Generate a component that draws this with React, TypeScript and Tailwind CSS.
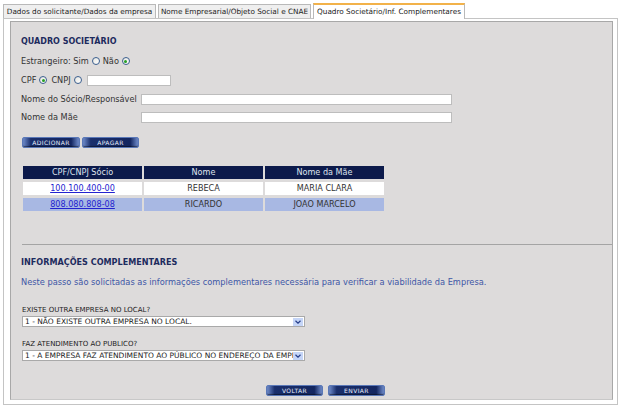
import React from 'react';

const font = { fontFamily: '"DejaVu Sans", Verdana, sans-serif' };

function Radio({ checked }: { checked?: boolean }) {
  return (
    <span className="inline-flex items-center justify-center w-[8px] h-[8px] rounded-full border border-[#3b5f8f] bg-[linear-gradient(135deg,#e6e6e0,#ffffff)]">
      {checked && <span className="block w-[3px] h-[3px] rounded-full bg-[#25a025]" />}
    </span>
  );
}

function NavButton({ label, className = '' }: { label: string; className?: string }) {
  return (
    <button
      className={
        'h-[11px] w-[57px] rounded-[2px] border border-[#5a78b8] text-[6px] leading-[9px] tracking-[0.4px] text-[#e8ecf8] ' +
        'bg-[linear-gradient(to_right,#6f8ccc,#1a2f6c_14%,#132660_86%,#6f8ccc)] shadow-[inset_0_-1px_1px_rgba(0,0,0,0.45)] ' +
        className
      }
    >
      {label}
    </button>
  );
}

function Select({ value }: { value: string }) {
  return (
    <div className="mt-[2px] ml-[1px] flex h-[11px] w-[283px] items-center border border-[#a9a9a9] bg-white">
      <span className="flex-1 overflow-hidden whitespace-nowrap pl-[2px] text-[7.5px] leading-[9px] text-[#222]">{value}</span>
      <span className="mr-[1px] flex h-[8px] w-[10px] items-center justify-center bg-[#c5d5f7]">
        <svg width="6" height="4" viewBox="0 0 6 4">
          <path d="M0.5 0.8 L3 3.2 L5.5 0.8" fill="none" stroke="#283f8a" strokeWidth="1.2" />
        </svg>
      </span>
    </div>
  );
}

const rows = [
  { doc: '100.100.400-00', nome: 'REBECA', mae: 'MARIA CLARA', bg: 'bg-white' },
  { doc: '808.080.808-08', nome: 'RICARDO', mae: 'JOAO MARCELO', bg: 'bg-[#a8b8e3]' },
];

export default function App() {
  const tabs = [
    { label: 'Dados do solicitante/Dados da empresa', w: 'w-[153px]' },
    { label: 'Nome Empresarial/Objeto Social e CNAE', w: 'w-[153px]' },
  ];

  return (
    <div className="w-[622px] h-[411px] bg-white pt-[3px] pl-[3px] text-[#333]" style={font}>
      {/* tabs */}
      <div className="flex h-[15px] items-end gap-[2px]">
        {tabs.map((t) => (
          <div
            key={t.label}
            className={`${t.w} h-[14px] border border-b-0 border-[#b9b9b9] bg-[#efefef] text-center text-[7.3px] leading-[13px] text-[#222] whitespace-nowrap`}
          >
            {t.label}
          </div>
        ))}
        <div className="relative z-10 -mb-px h-[16px] w-[152px] border border-b-0 border-[#b9b9b9] border-t-2 border-t-[#f2b24a] bg-white text-center text-[7.3px] leading-[14px] text-[#222] whitespace-nowrap">
          Quadro Societário/Inf. Complementares
        </div>
      </div>

      {/* outer panel */}
      <div className="h-[387px] w-[615px] border border-[#c4c4c4] pl-[6px] pt-[2px]">
        <div className="h-[379px] w-[603px] border border-[#a8a8a8] border-b-[#c8c8c8] bg-[#dddbdb] pl-[10px] pt-[15px]">
          <div className="h-[10px] text-[8px] font-bold leading-[10px] text-[#1d2b5e]">QUADRO SOCIETÁRIO</div>

          <div className="mt-[8px] flex h-[12px] items-center text-[8.2px]">
            <span>Estrangeiro: Sim</span>
            <span className="ml-[3px] flex"><Radio /></span>
            <span className="ml-[3px]">Não</span>
            <span className="ml-[3px] flex"><Radio checked /></span>
          </div>

          <div className="mt-[7px] flex h-[12px] items-center text-[8.2px]">
            <span>CPF</span>
            <span className="ml-[3px] flex"><Radio checked /></span>
            <span className="ml-[4px]">CNPJ</span>
            <span className="ml-[3px] flex"><Radio /></span>
            <span className="ml-[5px] h-[11px] w-[84px] border border-[#bdbdbd] bg-white" />
          </div>

          <div className="mt-[7px] flex h-[12px] items-center text-[8.2px]">
            <span className="w-[120px]">Nome do Sócio/Responsável</span>
            <span className="h-[11px] w-[311px] border border-[#bdbdbd] bg-white" />
          </div>

          <div className="mt-[6px] flex h-[12px] items-center text-[8.2px]">
            <span className="w-[120px]">Nome da Mãe</span>
            <span className="h-[11px] w-[311px] border border-[#bdbdbd] bg-white" />
          </div>

          <div className="mt-[14px] ml-[1px] flex gap-[2px]">
            <NavButton label="ADICIONAR" className="w-[58px]" />
            <NavButton label="APAGAR" />
          </div>

          <div className="mt-[18px] ml-[2px] grid w-[361px] grid-cols-[119px_119px_119px] gap-x-[2px] gap-y-[3px] text-[8.1px]">
            {['CPF/CNPJ Sócio', 'Nome', 'Nome da Mãe'].map((h) => (
              <div key={h} className="h-[13px] bg-[#0c1a4b] text-center leading-[13px] text-[#dfe3ee]">
                {h}
              </div>
            ))}
            {rows.map((r) => (
              <React.Fragment key={r.doc}>
                <div className={`${r.bg} h-[13px] text-center leading-[13px]`}>
                  <span className="text-[#2323cf] underline">{r.doc}</span>
                </div>
                <div className={`${r.bg} h-[13px] text-center leading-[13px] text-[#333]`}>{r.nome}</div>
                <div className={`${r.bg} h-[13px] text-center leading-[13px] text-[#333]`}>{r.mae}</div>
              </React.Fragment>
            ))}
          </div>

          <div className="mt-[33px] ml-[1px] h-px bg-[#a4a4a4]" />

          <div className="mt-[12px] h-[10px] text-[8.1px] font-bold leading-[10px] text-[#1d2b5e]">
            INFORMAÇÕES COMPLEMENTARES
          </div>
          <div className="mt-[10px] h-[10px] text-[8.25px] leading-[10px] text-[#3d57a6]">
            Neste passo são solicitadas as informações complementares necessária para verificar a viabilidade da Empresa.
          </div>

          <div className="mt-[19px] ml-[1px] h-[8px] text-[7px] leading-[8px] text-[#222]">EXISTE OUTRA EMPRESA NO LOCAL?</div>
          <Select value="1 - NÃO EXISTE OUTRA EMPRESA NO LOCAL." />

          <div className="mt-[13px] ml-[1px] h-[8px] text-[7px] leading-[8px] text-[#222]">FAZ ATENDIMENTO AO PUBLICO?</div>
          <Select value="1 - A EMPRESA FAZ ATENDIMENTO AO PÚBLICO NO ENDEREÇO DA EMPRESA" />

          <div className="mt-[24px] ml-[245px] flex gap-[5px]">
            <NavButton label="VOLTAR" />
            <NavButton label="ENVIAR" />
          </div>
        </div>
      </div>
    </div>
  );
}
